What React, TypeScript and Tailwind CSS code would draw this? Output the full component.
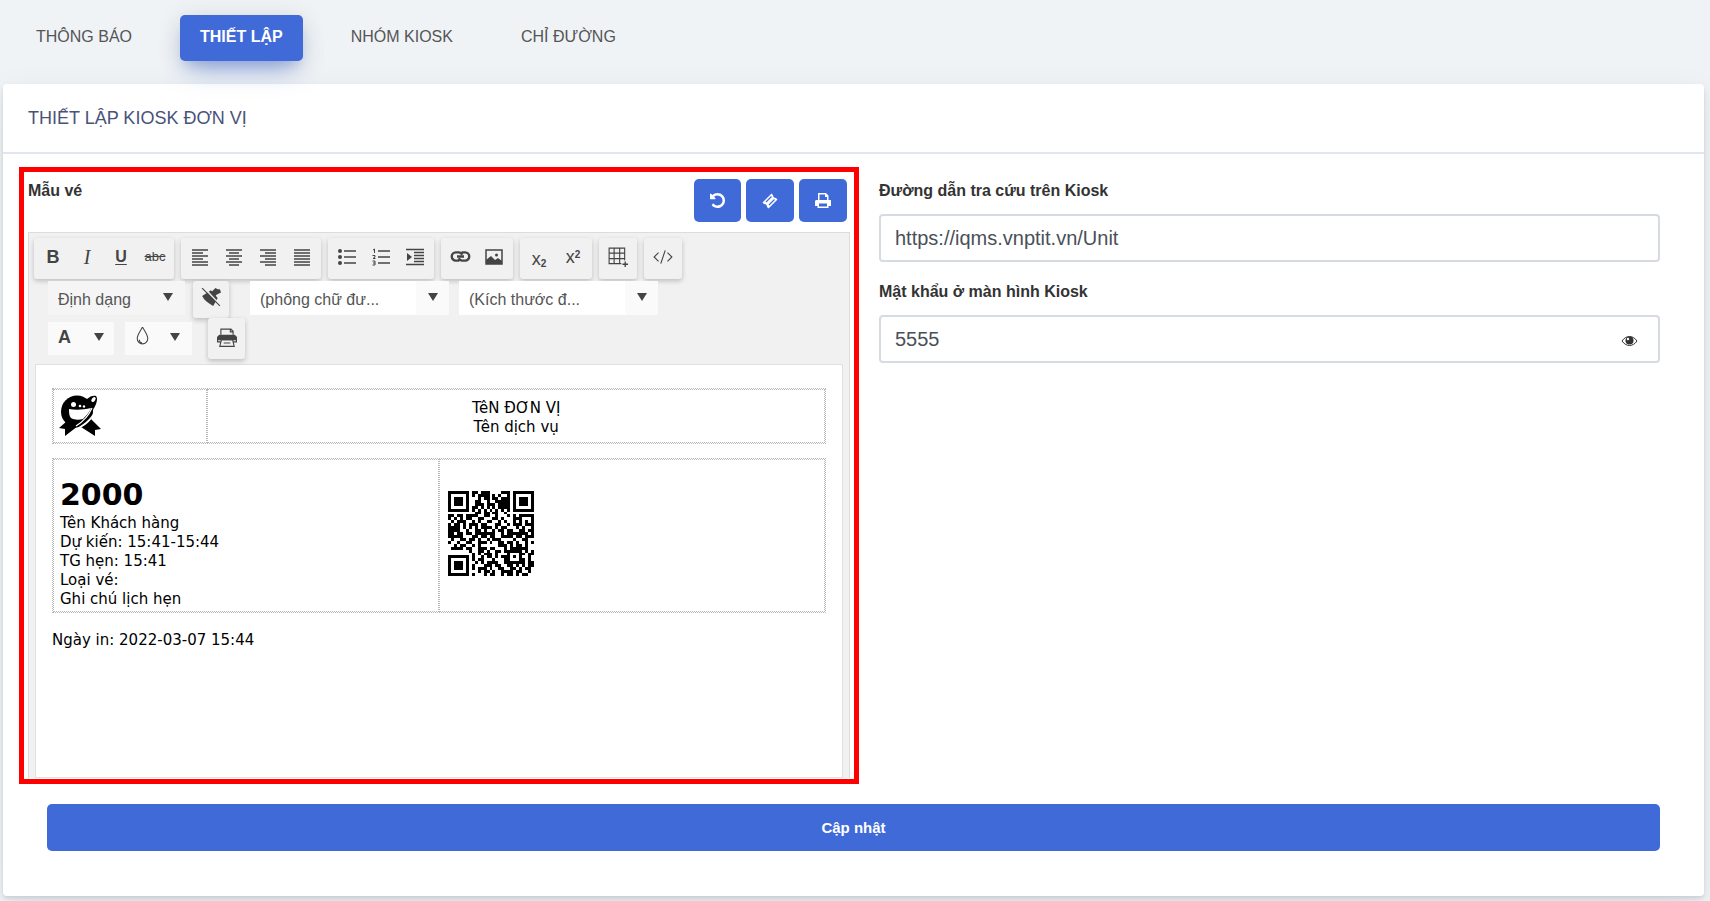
import { useState } from 'react'
import type { ReactNode } from 'react'

const tabs = ['THÔNG BÁO', 'THIẾT LẬP', 'NHÓM KIOSK', 'CHỈ ĐƯỜNG']

const qrRows = [
  '#######.##.###....###.#######',
  '#.....#.#.####.#.#..#.#.....#',
  '#.###.#...#.##.##.###.#.###.#',
  '#.###.#..##..#..#####.#.###.#',
  '#.###.#..###.###.####.#.###.#',
  '#.....#.##.#.#.#.####.#.....#',
  '#######.#.#.#.#.#.#.#.#######',
  '.........##.##.##..#.........',
  '##.##.####..##..#...#.#.#####',
  '#.#.#.##..##...##.#...###...#',
  '.#.###..#.#..##..#.#..#.#.#.#',
  '#.##.#.###.##...##..#.###.###',
  '####.#.#.#.####.#.##...#.#..#',
  '####..#..##.#..#.##.##..##.##',
  '##.##.##.#######..#.#######.#',
  '#####...##.##.##..####.##.###',
  '.#..##.##.#..#.###....#..##..',
  '#..#..##..###.#..##.##.#..#.#',
  '..#.##..#.#......###.#.##.#..',
  '.####.##..###.##...#.######..',
  '.......#..##.#..##.######.#.#',
  '........#.#.###.#...#...##.##',
  '#######.#..#.##.#.###.#.#..#.',
  '#.....#.#.##...#...##...##.#.',
  '#.###.#..#.#.####..#######.##',
  '#.###.#.#...###.##..##.#.#.##',
  '#.###.#.#.###.#..##..##.#.##.',
  '#.....#...#.##.#..####.##..#.',
  '#######.#...#.##..#.##.#.##..',
]

function QrCode() {
  return (
    <svg width="86" height="85" viewBox="0 0 29 29" preserveAspectRatio="none" role="img" aria-label="QR" shapeRendering="crispEdges">
      {qrRows.map((row, y) =>
        row.split('').map((cell, x) => (cell === '#' ? <rect key={`${x}-${y}`} x={x} y={y} width="1" height="1" /> : null))
      )}
    </svg>
  )
}

function Logo() {
  return (
    <svg width="42" height="42" viewBox="0 0 42 42" role="img" aria-label="Logo">
      <circle cx="18" cy="16.500" r="16" />
      <path d="M8 26L0 33l6 1v7l13-10 6-7z" />
      <path d="M31 23l-9 9 14 9v-6l6-1z" />
      <path d="M28 4c3-3 7-4 9-3 3 3-1 12-6 18l-5-7z" />
      <path d="M10 14c6 1 14 1 22-1-1 3-4 7-8 11-4 1-9 1-12-1-2-2-2-6-2-9z" fill="#fff" />
      <circle cx="14.500" cy="9.500" r="2.500" fill="#fff" />
      <circle cx="21" cy="11" r="1.300" fill="#fff" />
      <circle cx="25" cy="11.500" r="1.200" fill="#fff" />
      <ellipse cx="34.500" cy="4.500" rx="1.800" ry="2.800" transform="rotate(35 34.500 4.500)" fill="#fff" />
      <path d="M36 15C33 22 27 28 18 33l3 0c8-4 14-10 15-18z" fill="#fff" />
      <path d="M33 13c-3 7-8 13-16 18" fill="none" stroke="#fff" strokeWidth="1.200" />
      <path d="M14 37l6-4 7 3-1 6H12z" fill="#fff" />
    </svg>
  )
}

function UndoIcon() {
  return (
    <svg width="15" height="15" viewBox="0 0 1536 1536" fill="currentColor" aria-hidden="true">
      <path d="M1536 768q0 156-61 298t-164 245-245 164-298 61q-172 0-327-72.500T177 1259q-7-10-6.500-22.500T179 1216l137-138q10-9 25-9 16 2 23 12 73 95 179 147t225 52q104 0 198.500-40.500T1130 1130t109.500-163.500T1280 768t-40.500-198.500T1130 406 966.500 296.500 768 256q-98 0-188 35.500T420 393l137 138q31 30 14 69-17 40-59 40H64q-26 0-45-19T0 576V128q0-42 40-59 39-17 69 14l130 129q107-101 244.500-156.500T768 0q156 0 298 61t245 164 164 245 61 298z" />
    </svg>
  )
}

function TicketIcon() {
  return (
    <svg width="16" height="16" viewBox="0 0 16 16" aria-hidden="true">
      <path d="M.5 9.500L9.500.5l1.500 1.500c0 2 1 3 3 3l1.500 1.500-9 9L5 14c0-2-1-3-3-3z" fill="currentColor" />
      <path d="M4 9l5.500-5.500M7 12l5.500-5.500" fill="none" stroke="#3f6ad8" strokeWidth="1.200" />
    </svg>
  )
}

function PrintIcon() {
  return (
    <svg width="16" height="15" viewBox="0 0 16 15" aria-hidden="true">
      <path d="M3 0h8l2.500 2.500V7H16v6h-2.500v2h-11v-2H0V9c0-1.500.5-2 2-2h1z" fill="currentColor" />
      <path d="M4.500 1.500h5.500v2.500h2V7H4.500zM4 10.500h8v3H4z" fill="#3f6ad8" />
    </svg>
  )
}

function Icon({ children, size = 18 }: { children: ReactNode; size?: number }) {
  return (
    <svg width={size} height={size} viewBox="0 0 18 18" fill="none" stroke="currentColor" aria-hidden="true">
      {children}
    </svg>
  )
}

const icons = {
  left: <Icon><path strokeWidth="1.500" d="M1 2h16M1 5h11M1 8h16M1 11h11M1 14h16M1 17h16" /></Icon>,
  center: <Icon><path strokeWidth="1.500" d="M1 2h16M4 5h10M1 8h16M4 11h10M1 14h16M4 17h10" /></Icon>,
  right: <Icon><path strokeWidth="1.500" d="M1 2h16M6 5h11M1 8h16M6 11h11M1 14h16M6 17h11" /></Icon>,
  justify: <Icon><path strokeWidth="1.500" d="M1 2h16M1 5h16M1 8h16M1 11h16M1 14h16M1 17h16" /></Icon>,
  bullets: (
    <Icon>
      <path d="M6 3h12M6 9h12M6 15h12" strokeWidth="1.500" />
      <g fill="currentColor" stroke="none"><circle cx="2" cy="3" r="2" /><circle cx="2" cy="9" r="2" /><circle cx="2" cy="15" r="2" /></g>
    </Icon>
  ),
  numbers: (
    <Icon>
      <path d="M6 3h12M6 9h12M6 15h12" strokeWidth="1.500" />
      <path d="M1 2l1.500-1v4M.5 7.500h2.500v1.500l-2 1.500h2.500M.5 13h2.500v4H.5M1 15h2" />
    </Icon>
  ),
  indent: (
    <Icon>
      <path d="M0 1.500h18M8 4.500h10M8 7.500h10M8 10.500h10M8 13.500h10M0 16.500h18" strokeWidth="1.500" />
      <path d="M1 5l5 4-5 4z" fill="currentColor" stroke="none" />
    </Icon>
  ),
  link: (
    <Icon size={21}>
      <path d="M8 12.500H5a3.500 3.500 0 0 1 0-7h2.500c1.500 0 2.500 1 3 2M10 5.500H13a3.500 3.500 0 0 1 0 7h-2.500c-1.500 0-2.500-1-3-2M6 9h6" strokeWidth="2" />
    </Icon>
  ),
  image: (
    <Icon>
      <path d="M1 2h16v14H1z" strokeWidth="1.500" />
      <path d="M1 16v-4l5-4 4 4 3-2 4 3v3z" fill="currentColor" stroke="none" />
      <circle cx="11.500" cy="7" r="1.500" fill="currentColor" stroke="none" />
    </Icon>
  ),
  table: (
    <Icon size={20}>
      <path d="M1 1h14v14H1zM5.500 1v14M10.500 1v14M1 5.500h14M1 10.500h14" />
      <path d="M12 12h6v6h-6z" fill="#f1f1f1" stroke="none" />
      <path d="M15.500 13v5M13 15.500h5" strokeWidth="1.200" />
    </Icon>
  ),
  code: <Icon size={20}><path d="M5 5L1 9l4 4M13 5l4 4-4 4M11 3L7 15" /></Icon>,
  // brush crossed out by a diagonal line
  clean: (
    <Icon size={20}>
      <path d="M1 8l8-5 6 7-4 7c-4-2-8-5-10-9z" fill="currentColor" stroke="none" />
      <path d="M9 5l4-4 2 1h2l1 3-4 2-2 2z" fill="currentColor" stroke="none" />
      <path d="M2 0l15 16" stroke="#f1f1f1" strokeWidth="1.500" />
      <path d="M1 1l16 16" />
    </Icon>
  ),
  drop: <Icon size={19}><path d="M9 0c2 4 5 7 5 11a5 5 0 0 1-10 0C4 7 7 4 9 0z" /><path d="M6 12c0 2 1 3 2.500 3" /></Icon>,
  print: (
    <Icon size={20}>
      <path d="M3.500 6V1h9l2 2v3M12 1v2.500h2.500" />
      <path d="M2 6h14l2 2v3H0V8z" fill="currentColor" stroke="none" />
      <path d="M.5 10v2.500H4M17.500 10v2.500H14M4 10.500h10l1.500 6h-13zM6 13.500h6" />
    </Icon>
  ),
}

const toolGroups: { label: string; icon: ReactNode }[][] = [
  [
    { label: 'Bold', icon: <span className="text-lg font-bold">B</span> },
    { label: 'Italic', icon: <span className="font-['Liberation_Serif',serif] text-xl italic">I</span> },
    { label: 'Underline', icon: <span className="text-base font-bold underline underline-offset-2">U</span> },
    { label: 'Strikethrough', icon: <span className="text-[13px] line-through">abc</span> },
  ],
  [
    { label: 'Align left', icon: icons.left },
    { label: 'Align center', icon: icons.center },
    { label: 'Align right', icon: icons.right },
    { label: 'Justify', icon: icons.justify },
  ],
  [
    { label: 'Bullet list', icon: icons.bullets },
    { label: 'Numbered list', icon: icons.numbers },
    { label: 'Indent', icon: icons.indent },
  ],
  [
    { label: 'Link', icon: icons.link },
    { label: 'Image', icon: icons.image },
  ],
  [
    { label: 'Subscript', icon: <span className="pt-1 text-lg">x<sub className="text-[10px] font-bold">2</sub></span> },
    { label: 'Superscript', icon: <span className="text-lg">x<sup className="text-[10px] font-bold">2</sup></span> },
  ],
  [{ label: 'Table', icon: icons.table }],
  [{ label: 'HTML', icon: icons.code }],
]

function Caret() {
  return (
    <svg width="10" height="8" viewBox="0 0 10 8" fill="currentColor" aria-hidden="true">
      <path d="M0 0h10L5 8z" />
    </svg>
  )
}

function ToolButton({ label, children }: { label: string; children: ReactNode }) {
  return (
    <button type="button" aria-label={label} className="flex h-[41px] w-[34px] items-center justify-center pb-1">
      {children}
    </button>
  )
}

function Combo({ label, text }: { label: string; text: string }) {
  return (
    <div className="relative h-[34px] w-[199px]">
      <select aria-label={label} className="h-full w-full appearance-none rounded-none border-r-[33px] border-[#fafafa] bg-white pt-[3px] pl-[10px] text-base text-[#555]">
        <option>{text}</option>
      </select>
      <span className="pointer-events-none absolute top-3 right-[11px]"><Caret /></span>
    </div>
  )
}

const raised = 'rounded-[3px] bg-[#f1f1f1] shadow-[0_2px_5px_rgba(0,0,0,0.22)]'
const table = 'w-full table-fixed border-separate border-spacing-0 border border-dotted border-[#b8b8b8]'
const cell = 'border border-dotted border-[#b8b8b8]'

function Ticket() {
  return (
    <div className="mx-[6px] h-[414px] border border-[#e0e0e0] bg-white px-4 pt-[23px] font-['DejaVu_Sans',Verdana,sans-serif] text-[15px] leading-[19px] text-black">
      <table className={table}>
        <tbody>
          <tr className="h-[54px]">
            <td className={`w-1/5 px-[5px] ${cell}`}><Logo /></td>
            <td className={`px-[5px] pt-[3px] text-center ${cell}`}>TêN ĐƠN VỊ<br />Tên dịch vụ</td>
          </tr>
        </tbody>
      </table>
      <table className={`mt-[14px] ${table}`}>
        <tbody>
          <tr className="h-[153px]">
            <td className={`w-1/2 px-[6px] pt-[16px] ${cell}`}>
              <strong className="block pb-[3px] text-[30px] leading-[33px]">2000</strong>
              Tên Khách hàng<br />
              Dự kiến: 15:41-15:44<br />
              TG hẹn: 15:41<br />
              Loại vé:<br />
              Ghi chú lịch hẹn
            </td>
            <td className={`px-2 pb-1 ${cell}`}><QrCode /></td>
          </tr>
        </tbody>
      </table>
      <p className="mt-[18px]">Ngày in: 2022-03-07 15:44</p>
    </div>
  )
}

function Editor() {
  return (
    <div className="mx-1 mt-[10px] border border-b-0 border-[#dcdcdc] bg-[#f1f1f1] text-[#444]">
      <div className="h-[131px] px-[5px] pt-[5px]">
        <div className="flex flex-wrap gap-x-[7px]">
          {toolGroups.map((group, i) => (
            <div key={i} className={`flex px-[2px] ${raised}`}>
              {group.map((tool) => (
                <ToolButton key={tool.label} label={tool.label}>{tool.icon}</ToolButton>
              ))}
            </div>
          ))}
        </div>
        <div className="mt-[2px] flex items-start pl-[14px]">
          <div className="relative h-[34px] w-[137px]">
            <select aria-label="Định dạng" className="h-full w-full appearance-none rounded-none bg-[#f5f5f5] pt-[3px] pl-[10px] text-base text-[#555]">
              <option>Định dạng</option>
            </select>
            <span className="pointer-events-none absolute top-3 right-3"><Caret /></span>
          </div>
          <div className={`mr-[21px] ml-2 h-[37px] px-[1px] ${raised}`}>
            <button type="button" aria-label="Clean formatting" className="flex h-[34px] w-[34px] items-center justify-center pb-[2px]">{icons.clean}</button>
          </div>
          <Combo label="Phông chữ" text="(phông chữ đư..." />
          <div className="w-[10px]" />
          <Combo label="Kích thước" text="(Kích thước đ..." />
        </div>
        <div className="flex items-start pl-[14px]">
          <button type="button" aria-label="Màu chữ" className="mt-1 flex h-[33px] w-[66px] items-center justify-between bg-[#fafafa] px-[10px] pb-1">
            <span className="text-lg font-bold">A</span>
            <Caret />
          </button>
          <button type="button" aria-label="Màu nền" className="mt-1 ml-[11px] flex h-[33px] w-[67px] items-center justify-between bg-[#fafafa] px-2 pr-3 pb-1">
            {icons.drop}
            <Caret />
          </button>
          <div className={`ml-4 h-[41px] px-[1px] ${raised}`}>
            <button type="button" aria-label="In" className="flex h-[40px] w-[35px] items-center justify-center">{icons.print}</button>
          </div>
        </div>
      </div>
      <Ticket />
    </div>
  )
}

const blueButton = 'flex h-[43px] items-center justify-center rounded-[5px] bg-[#3f6ad8] text-white'
const labelClass = 'block text-base leading-[18px] font-bold text-[#333]'
const inputClass = 'h-12 w-full rounded border-2 border-[#d5dbe1] bg-white px-[14px] text-xl text-[#495057]'

export default function App() {
  const [active, setActive] = useState(1)
  const [url, setUrl] = useState('https://iqms.vnptit.vn/Unit')
  const [password, setPassword] = useState('5555')
  const [visible, setVisible] = useState(true)

  return (
    <div className="min-h-screen bg-[#eff3f6] pr-[6px] pb-[5px] pl-[3px] font-['Liberation_Sans',Arial,sans-serif]">
      <nav className="relative flex gap-[28px] px-[13px] pt-[15px] pb-[23px]">
        {tabs.map((tab, i) => (
          <button
            key={tab}
            type="button"
            onClick={() => setActive(i)}
            className={
              i === active
                ? 'h-[46px] rounded-[5px] bg-[#3f6ad8] px-5 pb-[2px] font-bold text-white shadow-[0_16px_26px_-10px_rgba(63,106,216,0.5),0_4px_25px_0_rgba(0,0,0,0.12),0_8px_10px_-5px_rgba(63,106,216,0.2)]'
                : 'h-[46px] px-5 pb-[2px] text-[#555]'
            }
          >
            {tab}
          </button>
        ))}
      </nav>

      <main className="rounded bg-white pb-[45px] shadow-[0_7px_35px_rgba(4,9,20,0.05),0_4px_8px_rgba(4,9,20,0.08),0_2px_3px_rgba(4,9,20,0.06)]">
        <h1 className="flex h-[70px] items-center border-b-2 border-[#e2e6ee] px-[25px] text-lg text-[#495277]">THIẾT LẬP KIOSK ĐƠN VỊ</h1>

        <div className="grid grid-cols-[840fr_781fr] gap-5 pt-[13px] pr-11 pl-4">
          <section className="h-[617px] overflow-hidden border-[5px] border-[#ff0000]">
            <div className="flex items-start justify-between pt-[7px] pr-[7px] pl-1">
              <h2 className={`pt-[3px] ${labelClass}`}>Mẫu vé</h2>
              <div className="flex gap-[5px]">
                <button type="button" aria-label="Khôi phục" className={`w-[47px] ${blueButton}`}><UndoIcon /></button>
                <button type="button" aria-label="Vé" className={`w-12 ${blueButton}`}><TicketIcon /></button>
                <button type="button" aria-label="In vé" className={`w-12 ${blueButton}`}><PrintIcon /></button>
              </div>
            </div>
            <Editor />
          </section>

          <section className="pt-[15px]">
            <label htmlFor="url" className={labelClass}>Đường dẫn tra cứu trên Kiosk</label>
            <input id="url" value={url} onChange={(e) => setUrl(e.target.value)} className={`mt-[14px] ${inputClass}`} />
            <label htmlFor="password" className={`mt-[21px] ${labelClass}`}>Mật khẩu ở màn hình Kiosk</label>
            <div className="relative mt-[14px]">
              <input
                id="password"
                type={visible ? 'text' : 'password'}
                value={password}
                onChange={(e) => setPassword(e.target.value)}
                className={inputClass}
              />
              <button type="button" aria-label="Hiện mật khẩu" onClick={() => setVisible(!visible)} className="absolute top-5 right-[22px]">
                <svg width="17" height="12" viewBox="0 0 17 12" fill="none" stroke="#333">
                  <path d="M1 6c4-6 11-6 15 0-4 6-11 6-15 0z" />
                  <circle cx="8.500" cy="5.500" r="4" fill="#333" stroke="none" />
                  <circle cx="7" cy="4" r="1.200" fill="#fff" stroke="none" />
                </svg>
              </button>
            </div>
          </section>
        </div>

        <div className="px-11 pt-5">
          <button type="button" className="h-[47px] w-full rounded-[5px] bg-[#3f6ad8] pt-[2px] text-[15px] font-bold text-white">Cập nhật</button>
        </div>
      </main>
    </div>
  )
}
